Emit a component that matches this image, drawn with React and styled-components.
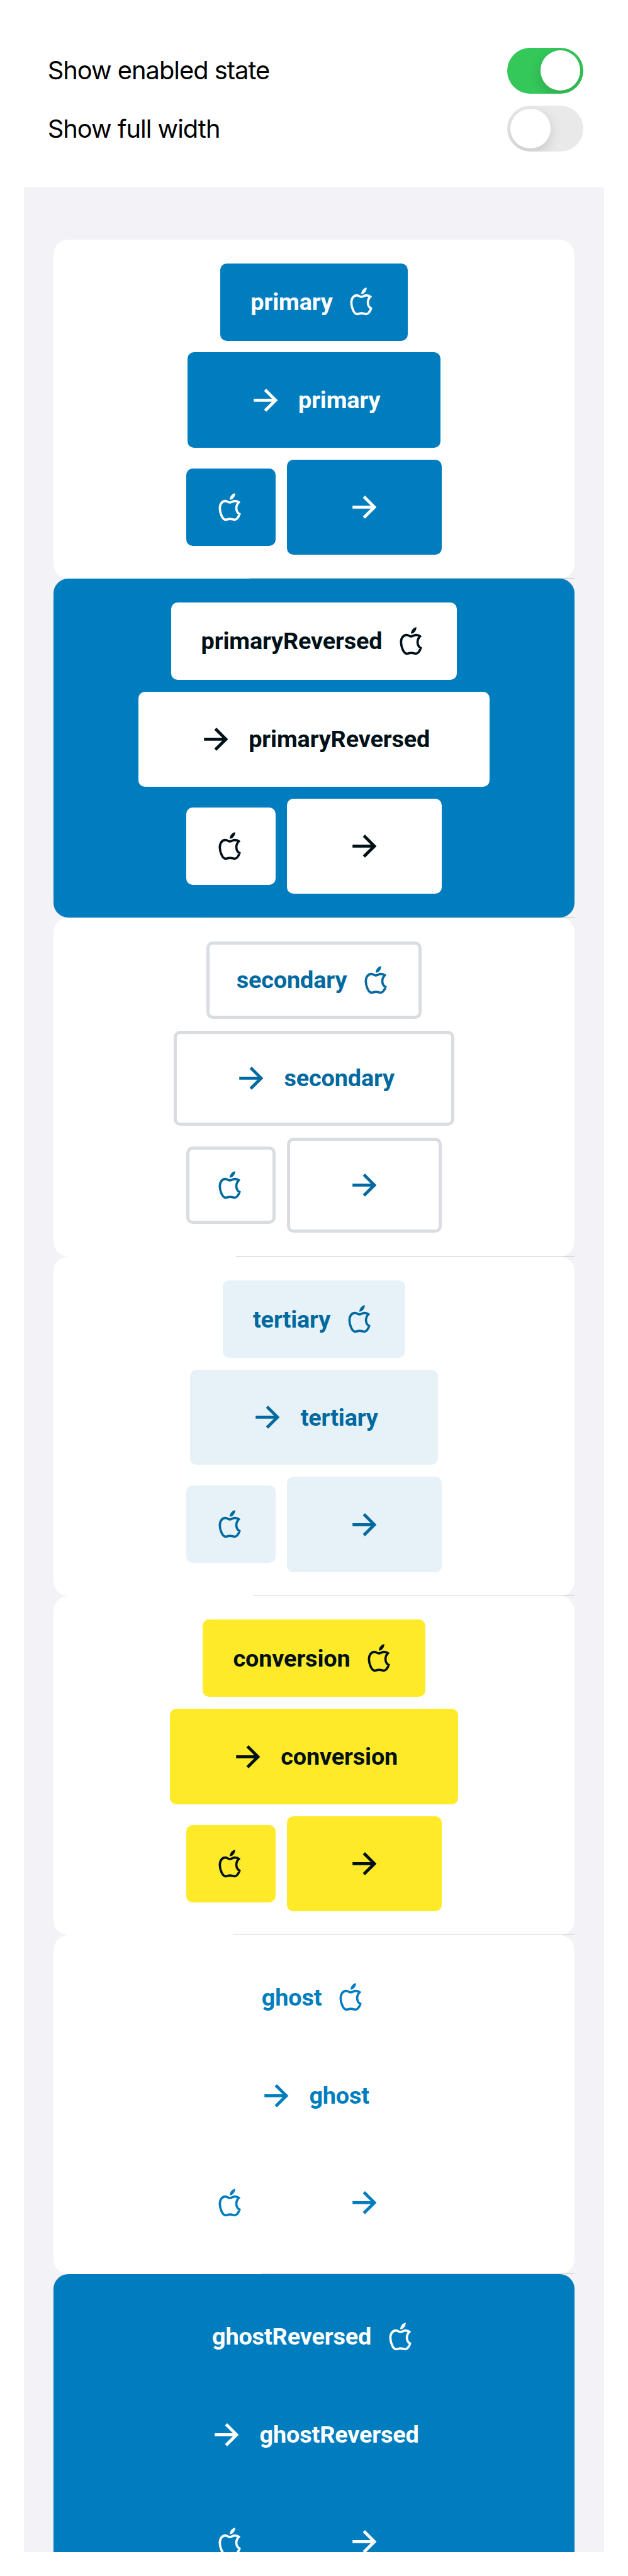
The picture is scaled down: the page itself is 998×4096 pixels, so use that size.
import React from 'react';
import styled, { createGlobalStyle } from 'styled-components';

const SCALE = 998 / 1266;
const u = (n) => `${(n * SCALE).toFixed(3)}px`;

const GlobalStyle = createGlobalStyle`
  *, *::before, *::after { box-sizing: border-box; }
  body { margin: 0; background: #fff; }
`;

const Screen = styled.main`
  width: 998px;
  height: 4096px;
  overflow: hidden;
  background: #fff;
  padding: ${u(96)} ${u(48)} 0;
`;

const Settings = styled.section`
  display: flex;
  flex-direction: column;
  gap: ${u(24)};
  height: ${u(282)};
  padding: 0 ${u(42)} 0 ${u(48)};
`;

const SettingRow = styled.label`
  display: flex;
  align-items: center;
  justify-content: space-between;
  height: ${u(93)};
`;

const SettingLabel = styled.span`
  font-family: Inter, 'Liberation Sans', sans-serif;
  font-size: ${u(50.5)};
  letter-spacing: -0.0245em;
  line-height: 1.2;
  color: #000;
  white-space: nowrap;
`;

const Track = styled.span`
  display: flex;
  justify-content: ${(p) => (p.$on ? 'flex-end' : 'flex-start')};
  width: ${u(153)};
  height: ${u(93)};
  padding: ${u(6)};
  border-radius: ${u(46.5)};
  overflow: hidden;
  background: ${(p) => (p.$on ? '#34c759' : '#e9e9e9')};
`;

const Knob = styled.span`
  width: ${u(81)};
  height: ${u(81)};
  border-radius: 50%;
  background: #fff;
  box-shadow: 0 ${u(9)} ${u(24)} rgba(0, 0, 0, 0.15);
`;

const Panel = styled.section`
  height: ${u(4770)};
  padding: ${u(105)} ${u(60)} 0;
  overflow: hidden;
  background: #f2f2f7;
`;

const Card = styled.article`
  position: relative;
  display: flex;
  flex-direction: column;
  align-items: center;
  gap: ${u(24)};
  height: ${u(684)};
  padding-top: ${u(48)};
  border-radius: ${u(30)};
  background: ${(p) => p.$bg};

  &::after {
    content: '';
    position: absolute;
    right: 0;
    bottom: 0;
    left: ${(p) => u(p.$inset)};
    height: 1px;
    background: rgba(60, 60, 67, 0.24);
  }
`;

const IconRow = styled.div`
  display: flex;
  align-items: center;
  gap: ${u(24)};
`;

const Button = styled.button`
  display: flex;
  align-items: center;
  justify-content: center;
  gap: ${u(30)};
  flex: none;
  width: ${(p) => u(p.$width)};
  height: ${(p) => u(p.$large ? 192 : 156)};
  padding: 0;
  border: ${(p) => (p.$border ? `5px solid ${p.$border}` : '0')};
  border-radius: ${u(13)};
  background: ${(p) => p.$bg};
  color: ${(p) => p.$fg};
  font-family: Roboto, 'Liberation Sans', sans-serif;
  font-weight: 700;
  font-size: ${u(48)};
  letter-spacing: -0.004em;
  line-height: ${u(56)};
  white-space: nowrap;
`;

const Glyph = styled.svg`
  display: block;
  flex: none;
  width: ${(p) => u(p.$size)};
  height: ${(p) => u(p.$size)};
`;

const AppleIcon = () => (
  <Glyph $size={60} viewBox="0 0 180 180" aria-hidden="true">
    <path
      d="M84 61C75 61 70 52 58 52C36 52 24 73 24 95C24 123 40 165 59 165C69 165 73 160 86 160C99 160 104 165 115 165C125 165 137 151 143 131C130 123 124 111 124 95C124 81 128 71 139 60C132 54 125 52 116 52C102 52 96 61 84 61Z"
      fill="none"
      stroke="currentColor"
      strokeWidth="14"
      strokeLinejoin="miter"
    />
    <path d="M117 5C118 18 109 43 84 45C83 31 94 9 117 5Z" fill="currentColor" />
  </Glyph>
);

const ArrowIcon = () => (
  <Glyph $size={72} viewBox="0 0 72 72" aria-hidden="true">
    <path
      d="M11.7 36H54M34.6 14.8L55.8 36L34.6 57.2"
      fill="none"
      stroke="currentColor"
      strokeWidth="6.2"
    />
  </Glyph>
);

const BLUE = '#007dbe';
const DEEP = '#00699f';
const INK = '#001018';

const variants = [
  { name: 'primary', card: '#fff', bg: BLUE, fg: '#fff', width: 377 },
  { name: 'primaryReversed', card: BLUE, bg: '#fff', fg: INK, width: 576 },
  { name: 'secondary', card: '#fff', bg: '#fff', fg: DEEP, border: '#d9dde1', width: 434 },
  { name: 'tertiary', card: '#fff', bg: '#e6f2f8', fg: DEEP, width: 367 },
  { name: 'conversion', card: '#fff', bg: '#ffea29', fg: INK, width: 448 },
  { name: 'ghost', card: '#fff', bg: 'transparent', fg: BLUE, width: 333 },
  { name: 'ghostReversed', card: BLUE, bg: 'transparent', fg: '#fff', width: 530 },
];

function ButtonCard({ name, card, bg, fg, border, width }) {
  const look = { $bg: bg, $fg: fg, $border: border };
  return (
    <Card $bg={card} $inset={(1050 - width) / 2 + 60}>
      <Button {...look} $width={width}>
        <span>{name}</span>
        <AppleIcon />
      </Button>
      <Button {...look} $width={width + 132} $large>
        <ArrowIcon />
        <span>{name}</span>
      </Button>
      <IconRow>
        <Button {...look} $width={180} aria-label={name}>
          <AppleIcon />
        </Button>
        <Button {...look} $width={312} $large aria-label={name}>
          <ArrowIcon />
        </Button>
      </IconRow>
    </Card>
  );
}

export default function App() {
  return (
    <>
      <GlobalStyle />
      <Screen>
        <Settings>
          <SettingRow>
            <SettingLabel>Show enabled state</SettingLabel>
            <Track $on>
              <Knob />
            </Track>
          </SettingRow>
          <SettingRow>
            <SettingLabel>Show full width</SettingLabel>
            <Track>
              <Knob />
            </Track>
          </SettingRow>
        </Settings>
        <Panel>
          {variants.map((v) => (
            <ButtonCard key={v.name} {...v} />
          ))}
        </Panel>
      </Screen>
    </>
  );
}
